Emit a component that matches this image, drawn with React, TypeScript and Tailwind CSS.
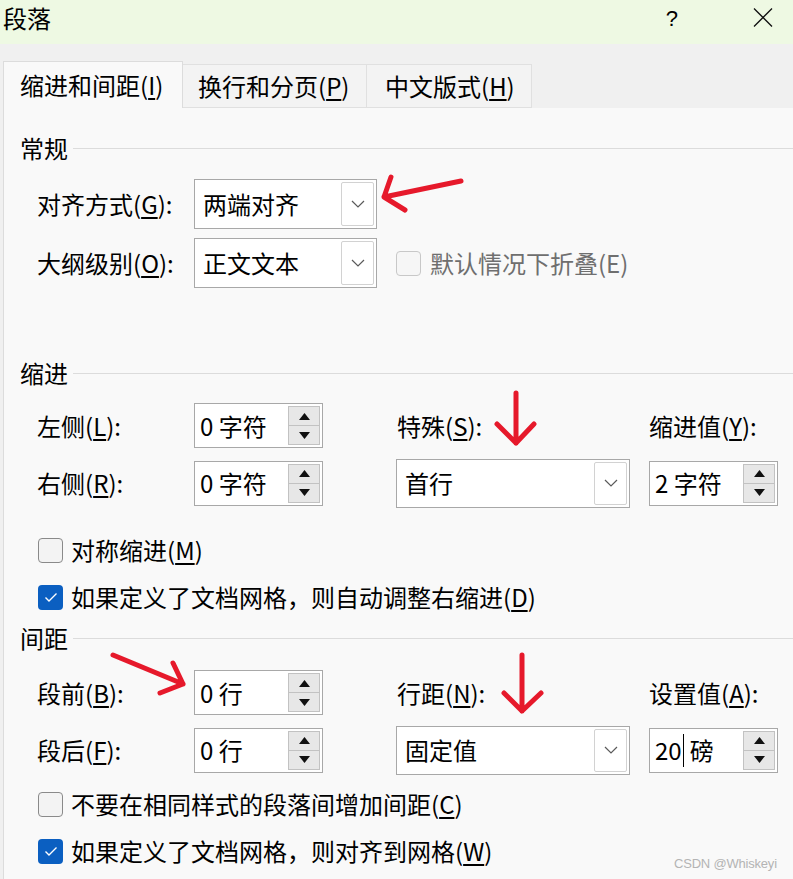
import React from "react";

const U = ({ children }: { children: React.ReactNode }) => (
  <span className="underline underline-offset-[3px] decoration-[1.5px]">{children}</span>
);

const Chevron = () => (
  <svg width="14" height="8" viewBox="0 0 14 8">
    <path d="M1 1 L7 7 L13 1" fill="none" stroke="#5a5a5a" strokeWidth="1.2" />
  </svg>
);

const Up = () => (
  <svg width="11" height="7" viewBox="0 0 11 7">
    <path d="M5.5 0 L11 7 L0 7 Z" fill="#111" />
  </svg>
);
const Down = () => (
  <svg width="11" height="7" viewBox="0 0 11 7">
    <path d="M0 0 L11 0 L5.5 7 Z" fill="#111" />
  </svg>
);

const Spin = ({ children }: { children: React.ReactNode }) => (
  <div className="flex w-[129px] h-[45px] border border-[#a8a8a8] bg-white pt-[2px] pb-[2px] pr-[2px]">
    <div className="flex-1 flex items-center pl-[5px] text-[24px] leading-none text-black">{children}</div>
    <div className="w-[32px] flex flex-col">
      <div className="flex-1 bg-[#e7e7e7] border border-[#c2c2c2] flex items-center justify-center">
        <Up />
      </div>
      <div className="flex-1 bg-[#e7e7e7] border border-t-0 border-[#c2c2c2] flex items-center justify-center">
        <Down />
      </div>
    </div>
  </div>
);

const Select = ({ children, wide }: { children: React.ReactNode; wide?: boolean }) => (
  <div
    className={
      wide
        ? "flex w-[234px] h-[49px] border border-[#a8a8a8] bg-white pt-[2px] pb-[2px] pr-[2px]"
        : "flex w-[183px] h-[50px] border border-[#a8a8a8] bg-white pt-[2px] pb-[2px] pr-[2px]"
    }
  >
    <div className="flex-1 flex items-center pl-[8px] text-[24px] leading-none text-black">{children}</div>
    <div className="w-[33px] border border-[#d2d2d2] rounded-[2px] flex items-center justify-center">
      <Chevron />
    </div>
  </div>
);

const Check = ({ checked, children }: { checked?: boolean; children: React.ReactNode }) => (
  <div className="flex items-center h-[28px] pl-[34px]">
    {checked ? (
      <div className="w-[25px] h-[25px] rounded-[4px] bg-[#0b5fc1] flex items-center justify-center">
        <svg width="14" height="11" viewBox="0 0 14 11">
          <path d="M1.5 5.5 L5 9 L12.5 1.5" fill="none" stroke="#fff" strokeWidth="1.4" />
        </svg>
      </div>
    ) : (
      <div className="w-[25px] h-[25px] rounded-[4px] bg-[#f3f3f3] border border-[#8a8a8a]" />
    )}
    <span className="ml-[8px] text-[24px] leading-none text-black">{children}</span>
  </div>
);

const Section = ({ children }: { children: React.ReactNode }) => (
  <div className="flex items-center h-[30px] pl-[16px]">
    <span className="text-[24px] leading-none text-black">{children}</span>
    <div className="flex-1 h-px bg-[#dcdcdc] ml-[5px]" />
  </div>
);

const Label = ({ children, w }: { children: React.ReactNode; w: string }) => (
  <div className={w + " text-[24px] leading-none text-black"}>{children}</div>
);

export default function App() {
  return (
    <div className="relative w-[793px] h-[879px] overflow-hidden bg-[#f0f0f0] font-['Noto_Sans_CJK_SC','Noto_Sans',sans-serif]">
      {/* Title bar */}
      <div className="h-[44px] bg-[#eef9e3] flex items-start">
        <div className="ml-[3px] mt-[1px] h-[34px] flex items-center text-[24px] text-black">段落</div>
        <div className="ml-auto mt-[1px] h-[34px] flex items-center text-[22px] text-black font-['Liberation_Sans',sans-serif]">?</div>
        <div className="ml-[75px] mr-[20px] mt-[8px]">
          <svg width="20" height="19" viewBox="0 0 20 19">
            <path d="M1 0.5 L19 18.5 M19 0.5 L1 18.5" stroke="#111" strokeWidth="1.3" fill="none" />
          </svg>
        </div>
      </div>

      {/* Tabs */}
      <div className="h-[64px] flex items-end pl-[3px]">
        <div className="w-[180px] h-[47px] bg-[#f9f9f9] border border-b-0 border-[#dcdcdc] flex items-center pl-[16px] text-[24px] leading-none text-black">
          缩进和间距(<U>I</U>)
        </div>
        <div className="w-[184px] h-[44px] bg-[#f3f3f3] border border-l-0 border-[#e0e0e0] flex items-center pl-[15px] text-[24px] leading-none text-black">
          换行和分页(<U>P</U>)
        </div>
        <div className="w-[165px] h-[44px] bg-[#f3f3f3] border border-l-0 border-[#e0e0e0] flex items-center pl-[18px] text-[24px] leading-none text-black">
          中文版式(<U>H</U>)
        </div>
      </div>

      {/* Panel */}
      <div className="ml-[3px] h-[771px] bg-[#f9f9f9] border-l border-[#dcdcdc]">
        <div className="pt-[25px]">
          <Section>常规</Section>
        </div>

        <div className="mt-[16px] h-[50px] flex items-center pl-[33px]">
          <Label w="w-[157px]">对齐方式(<U>G</U>):</Label>
          <Select>两端对齐</Select>
        </div>
        <div className="mt-[9px] h-[50px] flex items-center pl-[33px]">
          <Label w="w-[157px]">大纲级别(<U>O</U>):</Label>
          <Select>正文文本</Select>
          <div className="ml-[19px] w-[25px] h-[25px] rounded-[4px] border border-[#c8c8c8] bg-[#f6f6f6]" />
          <span className="ml-[9px] text-[24px] leading-none text-[#6f6f6f]">默认情况下折叠(E)</span>
        </div>

        <div className="mt-[70px]">
          <Section>缩进</Section>
        </div>

        <div className="mt-[15px] h-[45px] flex items-center pl-[33px]">
          <Label w="w-[157px]">左侧(<U>L</U>):</Label>
          <Spin>0 字符</Spin>
          <div className="w-[74px]" />
          <Label w="w-[252px]">特殊(<U>S</U>):</Label>
          <Label w="w-[140px]">缩进值(<U>Y</U>):</Label>
        </div>
        <div className="mt-[10px] h-[50px] flex items-center pl-[33px]">
          <Label w="w-[157px]">右侧(<U>R</U>):</Label>
          <Spin>0 字符</Spin>
          <div className="w-[73px]" />
          <Select wide>首行</Select>
          <div className="w-[19px]" />
          <Spin>2 字符</Spin>
        </div>

        <div className="mt-[28px]">
          <Check>对称缩进(<U>M</U>)</Check>
        </div>
        <div className="mt-[19px]">
          <Check checked>如果定义了文档网格，则自动调整右缩进(<U>D</U>)</Check>
        </div>

        <div className="mt-[12px]">
          <Section>间距</Section>
        </div>

        <div className="mt-[17px] h-[45px] flex items-center pl-[33px]">
          <Label w="w-[157px]">段前(<U>B</U>):</Label>
          <Spin>0 行</Spin>
          <div className="w-[74px]" />
          <Label w="w-[252px]">行距(<U>N</U>):</Label>
          <Label w="w-[140px]">设置值(<U>A</U>):</Label>
        </div>
        <div className="mt-[10px] h-[50px] flex items-center pl-[33px]">
          <Label w="w-[157px]">段后(<U>F</U>):</Label>
          <Spin>0 行</Spin>
          <div className="w-[73px]" />
          <Select wide>固定值</Select>
          <div className="w-[19px]" />
          <Spin>
            20<span className="inline-block w-px h-[33px] bg-black ml-[1px]" />
            <span className="ml-[6px]">磅</span>
          </Spin>
        </div>

        <div className="mt-[15px]">
          <Check>不要在相同样式的段落间增加间距(<U>C</U>)</Check>
        </div>
        <div className="mt-[19px] flex items-center">
          <Check checked>如果定义了文档网格，则对齐到网格(<U>W</U>)</Check>
        </div>
      </div>

      {/* watermark */}
      <div className="absolute left-[674px] top-[854px] text-[13px] tracking-[-0.2px] text-[#b4b4b4] font-['Liberation_Sans',sans-serif]">
        CSDN @Whiskeyi
      </div>

      {/* red annotation arrows */}
      <svg className="absolute left-0 top-0 pointer-events-none" width="793" height="879" viewBox="0 0 793 879">
        <g stroke="#e6192b" strokeWidth="5" strokeLinecap="round" strokeLinejoin="round" fill="none">
          <path d="M461 181 L384 197 M391 177 L384 197 L405 210" />
          <path d="M516 393 L516 443 M497 424 L516 443 L534 424" />
          <path d="M113 655 L183 684 M173 663 L183 684 L160 693" />
          <path d="M522 655 L522 711 M504 693 L522 711 L541 693" />
        </g>
      </svg>
    </div>
  );
}
